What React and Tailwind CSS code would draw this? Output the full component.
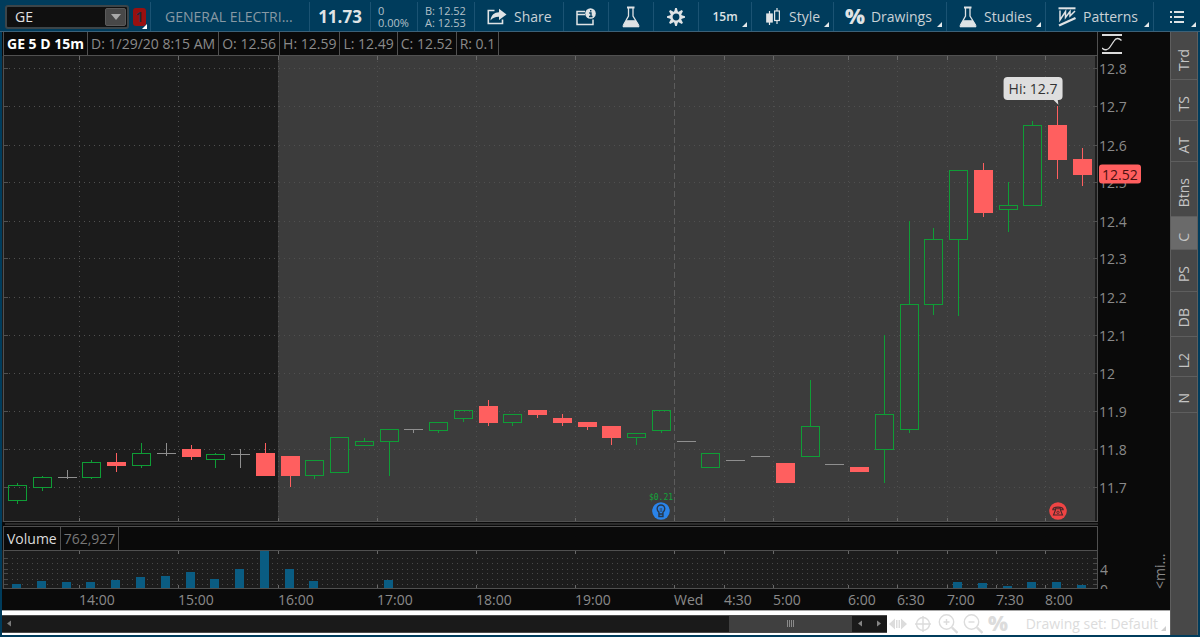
import React from "react";

const CANDLES = [
  ["g", 483, 485, 500, 504], ["g", 476, 477, 487, 491], ["w", 470, 477, 477, 479], ["g", 460, 462, 477, 479],
  ["r", 453, 462, 466, 472], ["g", 443, 453, 465, 468], ["w", 443, 453, 453, 456], ["r", 445, 449, 457, 460],
  ["g", 453, 454, 459, 468], ["w", 449, 454, 454, 468], ["r", 443, 453, 476, 476], ["r", 456, 456, 476, 487],
  ["g", 460, 460, 475, 479], ["g", 437, 437, 472, 472], ["g", 438, 441, 445, 445], ["g", 429, 429, 441, 476],
  ["w", 429, 429, 429, 433], ["g", 422, 422, 430, 433], ["g", 410, 410, 418, 422], ["r", 400, 406, 423, 426],
  ["g", 414, 414, 422, 426], ["r", 410, 410, 415, 418], ["r", 414, 418, 423, 426], ["r", 422, 422, 427, 430],
  ["r", 426, 426, 438, 445], ["g", 433, 433, 437, 445], ["g", 410, 410, 430, 433], ["w", 441, 441, 441, 441],
  ["g", 453, 453, 467, 467], ["w", 460, 460, 460, 460], ["w", 456, 456, 456, 456], ["r", 463, 463, 483, 483],
  ["g", 380, 426, 456, 456], ["w", 464, 464, 464, 464], ["r", 467, 467, 472, 472], ["g", 335, 414, 449, 483],
  ["g", 221, 304, 429, 433], ["g", 228, 239, 304, 315], ["g", 170, 170, 239, 316], ["r", 163, 170, 213, 217],
  ["g", 182, 205, 209, 232], ["g", 121, 125, 205, 205], ["r", 106, 125, 160, 179], ["r", 148, 159, 175, 186],
];

const VOLUMES = {
  0: 584, 1: 581, 2: 582, 3: 582, 4: 580, 5: 577, 6: 576, 7: 572, 8: 579, 9: 569, 10: 551, 11: 569, 12: 581,
  15: 580, 38: 582, 39: 583, 40: 586, 41: 582, 42: 582, 43: 585,
};

const TIMES = [
  ["14:00", 79], ["15:00", 178], ["16:00", 278], ["17:00", 377], ["18:00", 476], ["19:00", 575], ["Wed", 674],
  ["4:30", 724], ["5:00", 773], ["6:00", 848], ["6:30", 897], ["7:00", 947], ["7:30", 996], ["8:00", 1045],
];

const PRICES = [
  ["12.8", 68], ["12.7", 106], ["12.6", 145], ["12.5", 182], ["12.4", 221], ["12.3", 258], ["12.2", 297],
  ["12.1", 335], ["12", 373], ["11.9", 411], ["11.8", 449], ["11.7", 487],
];

const TABS = [
  ["Trd", "h-[48px]"], ["TS", "h-[41px]"], ["AT", "h-[41px]"], ["Btns", "h-[55px]"], ["C", "h-[33px]"],
  ["PS", "h-[42px]"], ["DB", "h-[45px]"], ["L2", "h-[40px]"], ["N", "h-[36px]"],
];

const COLORS = { g: "#0f9d36", r: "#ff5f5f", w: "#8f8f8f" };
const centerOf = (i) => Math.round(17.2 + 24.76 * i);
const pctX = (x) => `${((x - 2) / 1096) * 100}%`;
const pctY = (y) => `${((y - 56) / 466) * 100}%`;

function Corner({ className = "fill-[#e4e8ea]" }) {
  return (
    <svg viewBox="0 0 5 5" aria-hidden="true" className={`absolute right-1 bottom-1 h-[5px] w-[5px] ${className}`}>
      <path d="M5 0V5H0Z" />
    </svg>
  );
}

function Tool({ children, className = "", corner = false, label }) {
  return (
    <button
      type="button"
      aria-label={label}
      className={`relative flex h-full items-center border-l border-[#1b5373] text-[#c9d1d6] ${className}`}
    >
      {children}
      {corner && <Corner />}
    </button>
  );
}

function Flask() {
  return (
    <svg viewBox="0 0 18 22" aria-hidden="true" className="h-[22px] w-[18px] shrink-0" fill="none" stroke="#dfe3e5">
      <path d="M5 1.5h7.500" strokeWidth="2" />
      <path d="M6.500 2V10L1.500 19M11 2V10L16.500 19" strokeWidth="1.300" />
      <path d="M4.500 14.500H13.500L17 19.500V21H1V19.500Z" fill="#dfe3e5" strokeWidth="0.600" />
    </svg>
  );
}

function Gear() {
  return (
    <svg viewBox="0 0 20 20" aria-hidden="true" className="h-5 w-5" fill="none" stroke="#dfe3e5">
      <circle cx="10" cy="10" r="4.600" strokeWidth="2.400" />
      {[0, 45, 90, 135, 180, 225, 270, 315].map((a) => (
        <path key={a} d="M8 5L9.200 1H10.800L12 5Z" fill="#dfe3e5" stroke="none" transform={`rotate(${a} 10 10)`} />
      ))}
    </svg>
  );
}

function Percent({ className }) {
  return <span aria-hidden="true" className={`leading-none font-extrabold ${className}`}>%</span>;
}

function Toolbar() {
  return (
    <header className="flex h-8 shrink-0 items-stretch border-b border-[#3c6178] bg-[#003c5c] pt-[2px] text-[14px]">
      <div className="flex w-[150px] shrink-0 items-center gap-1 pl-[5px]">
        <div className="flex h-6 w-[124px] items-center rounded-[3px] border-2 border-[#3c4549] bg-[#101010] pr-px">
          <input aria-label="Symbol" defaultValue="GE" className="min-w-0 flex-1 bg-transparent pl-2 text-[14px] text-[#e2e2e2] outline-none" />
          <button type="button" aria-label="Choose symbol" className="flex h-[18px] w-[21px] items-center justify-center rounded-[2px] border border-[#5a5a5a] bg-[#484848]">
            <svg viewBox="0 0 10 6" className="h-[6px] w-[10px]"><path d="M0 0H10L5 6Z" fill="#a9a9a9" /></svg>
          </button>
        </div>
        <button type="button" className="relative flex h-[18px] w-[13px] items-center justify-center rounded-[3px] bg-[#981010] text-[15px] leading-none font-semibold text-[#1c2c40]">
          1
          <svg viewBox="0 0 5 5" className="absolute -right-px -bottom-[3px] h-[5px] w-[5px]"><path d="M5 0V5H0Z" fill="#fff" /></svg>
        </button>
      </div>
      <div className="flex min-w-0 flex-1 items-center border-l border-[#1b5373] pl-[14px] text-[#8799a4]">
        <span className="truncate">GENERAL ELECTRI...</span>
      </div>
      <div className="flex w-[61px] shrink-0 items-center justify-center border-l border-[#1b5373] text-[17px] font-bold text-[#dfe3e5]">11.73</div>
      <div className="flex w-[47px] shrink-0 flex-col justify-center border-l border-[#1b5373] pl-[7px] text-[11px] leading-3 text-[#b3c0c8]">
        <span>0</span><span>0.00%</span>
      </div>
      <div className="flex w-[57px] shrink-0 flex-col justify-center border-l border-[#1b5373] pl-[7px] text-[11px] leading-3 whitespace-nowrap text-[#b3c0c8]">
        <span>B: 12.52</span><span>A: 12.53</span>
      </div>
      <Tool className="w-[89px] gap-[7px] pl-3">
        <svg viewBox="0 0 20 17" aria-hidden="true" className="h-[17px] w-5" fill="none">
          <path d="M7.500 2.500H1.300V15.500H15.500V11.500" stroke="#dfe3e5" strokeWidth="1.600" />
          <path d="M3.500 12.500C4 7 7.500 4.500 12 4.300V0.800L19.500 6.500L12 12V8.700C8.500 8.600 5.500 9.700 3.500 12.500Z" fill="#dfe3e5" />
        </svg>
        Share
      </Tool>
      <Tool label="News" className="w-[45px] justify-center">
        <svg viewBox="0 0 20 18" aria-hidden="true" className="h-[18px] w-5" fill="none" stroke="#dfe3e5">
          <path d="M9 3.500H1V16.500H17V11.500M1 6.500H9" strokeWidth="1.500" />
          <circle cx="14.500" cy="5.500" r="5.300" fill="#dfe3e5" stroke="none" />
          <path d="M14.700 2v1.600M13.200 5H15V8.500M13 8.500H16.500" stroke="#003c5c" strokeWidth="1.400" />
        </svg>
      </Tool>
      <Tool label="Edit studies" className="w-[45px] justify-center"><Flask /></Tool>
      <Tool label="Settings" className="w-[45px] justify-center"><Gear /></Tool>
      <Tool corner className="w-[53px] justify-center text-[12px] font-semibold text-[#dfe3e5]">15m</Tool>
      <Tool corner className="w-[82px] gap-[8px] pl-[14px]">
        <svg viewBox="0 0 15 18" aria-hidden="true" className="h-[18px] w-[15px]" stroke="#dfe3e5" fill="none" strokeWidth="1.200">
          <path d="M3.500 3V17M11 0V3M11 12.500V16" />
          <rect x="0.800" y="6" width="5.400" height="8" fill="#dfe3e5" />
          <rect x="8.600" y="3" width="4.800" height="9.500" />
        </svg>
        Style
      </Tool>
      <Tool corner className="w-[113px] gap-[6px] pl-[11px]"><Percent className="text-[21px] text-[#dfe3e5]" />Drawings</Tool>
      <Tool corner className="w-[99px] gap-[7px] pl-[12px]"><Flask />Studies</Tool>
      <Tool corner className="w-[108px] gap-[7px] pl-[12px]">
        <svg viewBox="0 0 18 20" aria-hidden="true" className="h-5 w-[18px]" fill="none" stroke="#dfe3e5">
          <path d="M0.500 1.300H17.500" strokeWidth="2" />
          <path d="M2 3.500V13L7.500 4.500V10.500L12 4.500V9L17 4" strokeWidth="1.500" />
          <path d="M1 18.500L17.500 11" strokeWidth="2.400" />
        </svg>
        Patterns
      </Tool>
      <Tool label="Menu" corner className="w-[47px] justify-center">
        <svg viewBox="0 0 14 12" aria-hidden="true" className="h-3 w-[14px]" stroke="#dfe3e5" strokeWidth="2">
          <path d="M0 1H2M4 1H14M0 6H2M4 6H14M0 11H2M4 11H14" />
        </svg>
      </Tool>
    </header>
  );
}

function PricePlot() {
  return (
    <div className="relative min-h-0 flex-1">
      <svg viewBox="2 56 1096 466" preserveAspectRatio="none" aria-label="GE price candles" className="block h-full w-full">
        <rect x="2" y="56" width="1096" height="466" fill="#1c1c1c" />
        <rect x="278" y="56" width="817" height="466" fill="#3c3c3c" />
        {PRICES.map(([p, y]) => (
          <g key={p} stroke="#505050">
            <path d={`M4 ${y + 0.5}H1092`} strokeDasharray="1 4" />
            <path d={`M4 ${y + 0.5}h4M1093 ${y + 0.5}h4`} />
          </g>
        ))}
        {TIMES.map(([t, x]) => (
          <g key={t} stroke={t === "Wed" ? "#5c5c5c" : "#505050"}>
            <path d={`M${x + 0.5} 56V520`} strokeDasharray={t === "Wed" ? "6 3" : "1 4"} />
            <path d={`M${x + 0.5} 56v4M${x + 0.5} 518v3`} stroke="#686868" />
          </g>
        ))}
        <path d="M3.500 56V522M1097.500 56V522M3 521.500H1098" stroke="#505050" />
        {CANDLES.map(([c, hi, top, bottom, lo], i) => {
          const x = centerOf(i);
          const color = COLORS[c];
          if (c === "w") {
            return (
              <g key={i} stroke={color}>
                <path d={`M${x - 9} ${top + 0.5}h19`} />
                {lo > hi && <path d={`M${x + 0.5} ${hi}V${lo}`} />}
              </g>
            );
          }
          return (
            <g key={i} stroke={color}>
              <path d={`M${x + 0.5} ${hi}V${top}M${x + 0.5} ${bottom}V${lo}`} />
              {c === "r" ? (
                <rect x={x - 9} y={top} width="19" height={bottom - top} fill={color} stroke="none" />
              ) : (
                <rect x={x - 8.5} y={top + 0.5} width="18" height={bottom - top} fill="none" />
              )}
            </g>
          );
        })}
      </svg>
      <div className="absolute -translate-x-1/2 -translate-y-full" style={{ left: pctX(1033), top: pctY(100) }}>
        <div className="relative h-[23px] rounded-[4px] bg-[#dedede] px-[5px] text-[14px] leading-[24px] whitespace-nowrap text-[#333]">
          Hi: 12.7
          <svg viewBox="0 0 6 6" aria-hidden="true" className="absolute right-1 -bottom-[5px] h-[6px] w-[6px]"><path d="M0 0H5L6 6Z" fill="#dedede" /></svg>
        </div>
      </div>
      <div className="absolute flex -translate-x-1/2 -translate-y-full flex-col items-center" style={{ left: pctX(661), top: pctY(520) }}>
        <span className="font-['DejaVu_Sans_Mono',monospace] text-[8px] leading-[8px] text-[#12a53a]">$0.21</span>
        <svg viewBox="0 0 18 18" aria-label="Dividend" className="h-[18px] w-[18px]">
          <circle cx="9" cy="9" r="8.800" fill="#2a84ea" />
          <path d="M7 12V10.200C5.700 9.200 5.200 8 5.200 6.800A3.800 3.800 0 0 1 12.800 6.800C12.800 8 12.300 9.200 11 10.200V12ZM7 12V14.500H11V12" fill="none" stroke="#27384d" strokeWidth="1.400" />
          <path d="M8.300 6V10M9.700 6V10" stroke="#27384d" strokeWidth="0.600" />
        </svg>
      </div>
      <div className="absolute -translate-x-1/2 -translate-y-full" style={{ left: pctX(1058), top: pctY(520) }}>
        <svg viewBox="0 0 18 18" aria-label="Earnings call" className="block h-[18px] w-[18px]">
          <circle cx="9" cy="9" r="8.800" fill="#ef4444" />
          <path d="M3.800 7.800C4 4.200 14 4.200 14.200 7.800H11.500V6.800H6.500V7.800Z" fill="none" stroke="#46282a" strokeWidth="1.100" />
          <path d="M6.500 8L4.500 13H13.500L11.500 8" fill="none" stroke="#46282a" strokeWidth="1.100" />
          <circle cx="9" cy="10.300" r="1.200" fill="none" stroke="#46282a" strokeWidth="0.800" />
        </svg>
      </div>
    </div>
  );
}

function VolumePlot() {
  return (
    <svg viewBox="2 550 1096 39" preserveAspectRatio="none" aria-label="Volume bars" className="block h-[39px] w-full shrink-0">
      <rect x="2" y="550" width="1096" height="39" fill="#1c1c1c" />
      {[558, 563, 569, 573, 579, 584].map((y) => (
        <g key={y} stroke="#484848">
          <path d={`M7 ${y + 0.5}H1090`} strokeDasharray="1 4" />
          <path d={`M4 ${y + 0.5}h4M1093 ${y + 0.5}h4`} />
        </g>
      ))}
      {TIMES.map(([t, x]) => (
        <path key={t} d={`M${x + 0.5} 550v4M${x + 0.5} 585v4`} stroke="#686868" />
      ))}
      {Object.entries(VOLUMES).map(([i, y]) => (
        <rect key={i} x={centerOf(Number(i)) - 5} y={y} width="9" height={588 - y} fill="#0a5c82" />
      ))}
      <path d="M3.500 550V589M1097.500 550V589M3 550.500H1098M3 588.500H1098" stroke="#505050" />
    </svg>
  );
}

const HEAD_CELLS = ["D: 1/29/20 8:15 AM", "O: 12.56", "H: 12.59", "L: 12.49", "C: 12.52", "R: 0.1"];

function PriceAxis() {
  return (
    <div className="flex w-[72px] shrink-0 flex-col text-[14px] text-[#8a8a8a]">
      <button type="button" aria-label="Scale" className="h-6 shrink-0 pl-1">
        <svg viewBox="0 0 20 20" className="h-5 w-5" fill="none" stroke="#dcdcdc">
          <path d="M0 1H20M0 19H20" strokeWidth="2" />
          <path d="M0 14C2.500 16.500 6 16.500 8 13L12 7C14 3.500 17 4 19.500 6.500" strokeWidth="1.300" />
        </svg>
      </button>
      <div className="relative min-h-0 flex-1">
        {PRICES.map(([p, y]) => (
          <span key={p} className="absolute left-px -translate-y-1/2 leading-5" style={{ top: pctY(y + 1) }}>{p}</span>
        ))}
        <span className="absolute left-px -translate-y-1/2 rounded-[3px] bg-[#ff5f5f] px-[3px] leading-[19px] text-[#4a1010]" style={{ top: pctY(174) }}>12.52</span>
      </div>
      <div className="flex h-[88px] shrink-0 justify-between pt-[28px] pr-[2px] pl-[2px]">
        <div className="flex h-[39px] flex-col justify-end overflow-hidden">
          <span className="h-5 leading-5">4</span>
          <span className="h-[9px] leading-5">0</span>
        </div>
        <span className="h-[39px] rotate-180 text-[14px] leading-4 [writing-mode:vertical-rl]">&lt;mi...</span>
      </div>
    </div>
  );
}

function BottomBar() {
  const icon = "h-5 w-5";
  return (
    <footer className="flex h-[25px] shrink-0 items-center border-t border-[#a8a8a8] bg-white pt-px">
      <div className="flex h-[18px] min-w-0 flex-1 items-center border-y border-[#4a4a4a] bg-[#1a1a1a]">
        <button type="button" aria-label="Scroll to start" className="w-3 pl-[5px]">
          <svg viewBox="0 0 4 6" className="h-[7px] w-[4px]"><path d="M4 0V6L0 3Z" fill="#7a7a7a" /></svg>
        </button>
        <div className="flex h-full flex-1 justify-end">
          <div className="flex h-full w-[123px] items-center justify-center gap-px bg-[#404040]">
            <i className="h-[7px] w-px bg-[#8a8a8a]" /><i className="h-[7px] w-px bg-[#8a8a8a]" /><i className="h-[7px] w-px bg-[#8a8a8a]" /><i className="h-[7px] w-px bg-[#8a8a8a]" />
          </div>
        </div>
        <div className="flex w-[35px] items-center justify-between px-[6px]">
          <button type="button" aria-label="Scroll left" className="flex"><svg viewBox="0 0 4 6" className="h-[7px] w-[4px]"><path d="M4 0V6L0 3Z" fill="#858585" /></svg></button>
          <button type="button" aria-label="Scroll right" className="flex"><svg viewBox="0 0 4 6" className="h-[7px] w-[4px]"><path d="M0 0V6L4 3Z" fill="#858585" /></svg></button>
        </div>
      </div>
      <div className="relative flex w-[283px] shrink-0 items-center gap-[5px] self-stretch pl-px text-[#dcdcdc]">
        <button type="button" aria-label="Pan">
          <svg viewBox="0 0 20 20" className={icon} fill="#dcdcdc"><path d="M1 10L7 4.500V15.500ZM19 10L13 4.500V15.500ZM8 6H9.500V14H8ZM10.500 6H12V14H10.500Z" /></svg>
        </button>
        <button type="button" aria-label="Crosshair">
          <svg viewBox="0 0 20 20" className={icon} fill="none" stroke="#dcdcdc" strokeWidth="1.400"><circle cx="10" cy="10" r="6.500" /><path d="M2 10H18M10 2V18" /></svg>
        </button>
        <button type="button" aria-label="Zoom in">
          <svg viewBox="0 0 20 20" className={icon} fill="none" stroke="#dcdcdc" strokeWidth="1.400"><circle cx="8.500" cy="8" r="7.200" /><path d="M5.500 8H11.500M8.500 5V11" /><path d="M14 13.500L19.500 19" strokeWidth="2.400" /></svg>
        </button>
        <button type="button" aria-label="Zoom out">
          <svg viewBox="0 0 20 20" className={icon} fill="none" stroke="#dcdcdc" strokeWidth="1.400"><circle cx="8.500" cy="8" r="7.200" /><path d="M5.500 8H11.500" /><path d="M14 13.500L19.500 19" strokeWidth="2.400" /></svg>
        </button>
        <button type="button" aria-label="Drawings" className="flex"><Percent className="text-[21px]" /></button>
        <button type="button" className="ml-auto pr-3 text-[14px] leading-5 whitespace-nowrap">Drawing set: Default</button>
        <Corner className="fill-[#cfcfcf]" />
      </div>
    </footer>
  );
}

export default function App() {
  return (
    <div className="flex h-screen min-h-[420px] flex-col overflow-hidden bg-[#003c5c] font-['Open_Sans',sans-serif]">
      <Toolbar />
      <main className="flex min-h-0 flex-1 px-[2px] pb-[2px]">
        <div className="flex min-w-0 flex-1 flex-col bg-[#0a0a0a]">
          <div className="flex min-h-0 flex-1">
            <section className="flex min-w-0 flex-1 flex-col text-[14px] text-[#8a8a8a]">
              <div className="ml-px flex h-6 shrink-0 items-stretch border-r border-b border-l border-[#505050] leading-[23px] whitespace-nowrap">
                <h1 className="border-r border-[#505050] px-[3px] font-bold text-white">GE 5 D 15m</h1>
                {HEAD_CELLS.map((c) => (
                  <span key={c} className="border-r border-[#505050] px-[3px]">{c}</span>
                ))}
              </div>
              <PricePlot />
              <div className="flex h-[4px] shrink-0 items-center pl-[3px]"><div className="h-[2px] w-full bg-[#2b2b2b]" /></div>
              <div className="ml-px flex h-6 shrink-0 items-stretch border-t border-r border-l border-[#505050] leading-[23px]">
                <h2 className="border-r border-[#505050] px-[3px] text-[#dcdcdc]">Volume</h2>
                <span className="border-r border-[#505050] px-[3px] text-[#777]">762,927</span>
              </div>
              <VolumePlot />
              <div className="relative h-[21px] shrink-0">
                {TIMES.map(([t, x]) => (
                  <span key={t} className="absolute top-[1px] leading-5" style={{ left: pctX(x) }}>{t}</span>
                ))}
              </div>
            </section>
            <PriceAxis />
          </div>
          <BottomBar />
        </div>
        <nav className="flex w-7 shrink-0 flex-col border-x border-[#5e5e5e] bg-[#484848] text-[14px] text-[#c4c4c4]">
          {TABS.map(([name, size]) => (
            <button
              key={name}
              type="button"
              className={`flex shrink-0 items-center justify-center border-b border-[#5e5e5e] pt-2 ${size} ${name === "C" ? "bg-[#6a6a6a]" : ""}`}
            >
              <span className="rotate-180 leading-5 [writing-mode:vertical-rl]">{name}</span>
            </button>
          ))}
        </nav>
      </main>
    </div>
  );
}
